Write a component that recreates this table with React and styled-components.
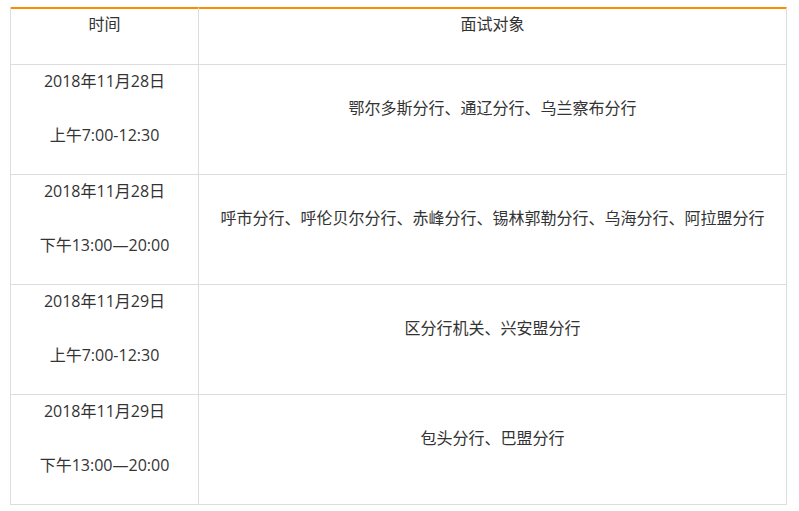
import styled, { createGlobalStyle } from "styled-components";

const GlobalStyle = createGlobalStyle`
  body {
    margin: 0;
    background: #fff;
    font-family: "Open Sans", "Noto Sans CJK SC", "Microsoft YaHei", sans-serif;
    color: #333;
  }
`;

const Page = styled.div`
  padding: 7px 0 0 10px;
`;

const Table = styled.table`
  width: 777px;
  border-collapse: separate;
  border-spacing: 0;
  border-left: 1px solid #ddd;
  table-layout: fixed;
  font-size: 16px;
  line-height: 24px;
`;

const Head = styled.th`
  font-weight: normal;
  height: 58px;
  padding: 4px 0 28px;
  box-sizing: border-box;
  vertical-align: middle;
  text-align: center;
  border-top: 1px solid rgb(255, 138, 0);
  box-shadow: inset 0 1px 0 rgb(255, 138, 0);
  border-right: 1px solid #ddd;
  border-bottom: 1px solid #ddd;
`;

const Cell = styled.td`
  height: 110px;
  padding: 4px 0 27px;
  box-sizing: border-box;
  vertical-align: middle;
  text-align: center;
  border-right: 1px solid #ddd;
  border-bottom: 1px solid #ddd;
`;

const When = styled.div`
  display: flex;
  flex-direction: column;
  align-items: center;
  gap: 30px;
`;

const rows = [
  { date: "2018年11月28日", time: "上午7:00-12:30", who: "鄂尔多斯分行、通辽分行、乌兰察布分行" },
  {
    date: "2018年11月28日",
    time: "下午13:00—20:00",
    who: "呼市分行、呼伦贝尔分行、赤峰分行、锡林郭勒分行、乌海分行、阿拉盟分行",
  },
  { date: "2018年11月29日", time: "上午7:00-12:30", who: "区分行机关、兴安盟分行" },
  { date: "2018年11月29日", time: "下午13:00—20:00", who: "包头分行、巴盟分行" },
];

export default function App() {
  return (
    <Page>
      <GlobalStyle />
      <Table>
        <colgroup>
          <col style={{ width: 188 }} />
          <col />
        </colgroup>
        <thead>
          <tr>
            <Head>时间</Head>
            <Head>面试对象</Head>
          </tr>
        </thead>
        <tbody>
          {rows.map((r, i) => (
            <tr key={i}>
              <Cell>
                <When>
                  <span>{r.date}</span>
                  <span>{r.time}</span>
                </When>
              </Cell>
              <Cell>{r.who}</Cell>
            </tr>
          ))}
        </tbody>
      </Table>
    </Page>
  );
}
